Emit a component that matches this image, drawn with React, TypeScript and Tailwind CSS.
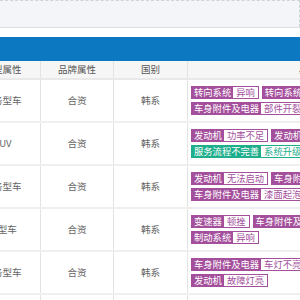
const PURPLE = 'purple'
const GREEN = 'green'

type Tag = { label: string; detail: string; tone?: string }

interface Row {
  model: string
  brand: string
  country: string
  tags: Tag[]
}

const rows: Row[] = [
  {
    model: '商务型车',
    brand: '合资',
    country: '韩系',
    tags: [
      { label: '转向系统', detail: '异响' },
      { label: '转向系统', detail: '异响' },
      { label: '车身附件及电器', detail: '部件开裂' },
    ],
  },
  {
    model: 'SUV',
    brand: '合资',
    country: '韩系',
    tags: [
      { label: '发动机', detail: '功率不足' },
      { label: '发动机', detail: '异响' },
      { label: '服务流程不完善', detail: '系统升级', tone: GREEN },
    ],
  },
  {
    model: '商务型车',
    brand: '合资',
    country: '韩系',
    tags: [
      { label: '发动机', detail: '无法启动' },
      { label: '车身附件及电器', detail: '异响' },
      { label: '车身附件及电器', detail: '漆面起泡' },
    ],
  },
  {
    model: '小型车',
    brand: '合资',
    country: '韩系',
    tags: [
      { label: '变速器', detail: '顿挫' },
      { label: '车身附件及电器', detail: '异响' },
      { label: '制动系统', detail: '异响' },
    ],
  },
  {
    model: '商务型车',
    brand: '合资',
    country: '韩系',
    tags: [
      { label: '车身附件及电器', detail: '车灯不亮' },
      { label: '发动机', detail: '故障灯亮' },
    ],
  },
  {
    model: '商务型车',
    brand: '合资',
    country: '韩系',
    tags: [
      { label: '车身附件及电器', detail: '异响' },
      { label: '发动机', detail: '异响' },
    ],
  },
]

function FaultTag({ label, detail, tone = PURPLE }: Tag) {
  const green = tone === GREEN
  return (
    <span
      className={`inline-flex border ${green ? 'border-[#1eae8b]' : 'border-[#a44f9c]'} text-[9.3px] leading-[11px]`}
    >
      <span className={`px-[2px] text-white ${green ? 'bg-[#1eae8b]' : 'bg-[#a44f9c]'}`}>{label}</span>
      <span className={`bg-white px-[3px] ${green ? 'text-[#1eae8b]' : 'text-[#a44f9c]'}`}>{detail}</span>
    </span>
  )
}

const cols = 'grid grid-cols-[76px_73px_74px_260px]'

export default function App() {
  return (
    <div
      className="h-[300px] w-[300px] overflow-hidden bg-white text-[#666]"
      style={{ fontFamily: '"Noto Sans CJK SC", "Noto Sans", sans-serif' }}
    >
      <div className="h-[27px] border-t border-r border-dashed border-[#cfd3d8] bg-[#f3f5f8]" />
      <div className="h-[10px] border-t border-[#dde0e4] bg-white" />
      <div className="h-[24px] bg-[#0b78c1]" />

      <div className="ml-[-35px]">
        <div className={`${cols} h-[19px] border-b-2 border-[#e9e9e9] bg-[#f6f6f6] text-[9.5px] text-[#555]`}>
          <div className="flex items-center justify-center border-r border-[#e3e3e3]">车型属性</div>
          <div className="flex items-center justify-center border-r border-[#e3e3e3]">品牌属性</div>
          <div className="flex items-center justify-center border-r border-[#e3e3e3]">国别</div>
          <div className="flex items-center justify-center">典型故障</div>
        </div>

        {rows.map((row, i) => (
          <div key={i} className={`${cols} h-[43px] border-b-2 border-[#efefef] text-[9.6px]`}>
            <div className="flex items-center justify-center border-r border-[#e3e3e3]">{row.model}</div>
            <div className="flex items-center justify-center border-r border-[#e3e3e3]">{row.brand}</div>
            <div className="flex items-center justify-center border-r border-[#e3e3e3]">{row.country}</div>
            <div className="flex items-center pl-[3px]">
              <div className="flex w-[185px] flex-wrap gap-x-[3px] gap-y-[3px]">
                {row.tags.map((t, j) => (
                  <FaultTag key={j} {...t} />
                ))}
              </div>
            </div>
          </div>
        ))}
      </div>
    </div>
  )
}
